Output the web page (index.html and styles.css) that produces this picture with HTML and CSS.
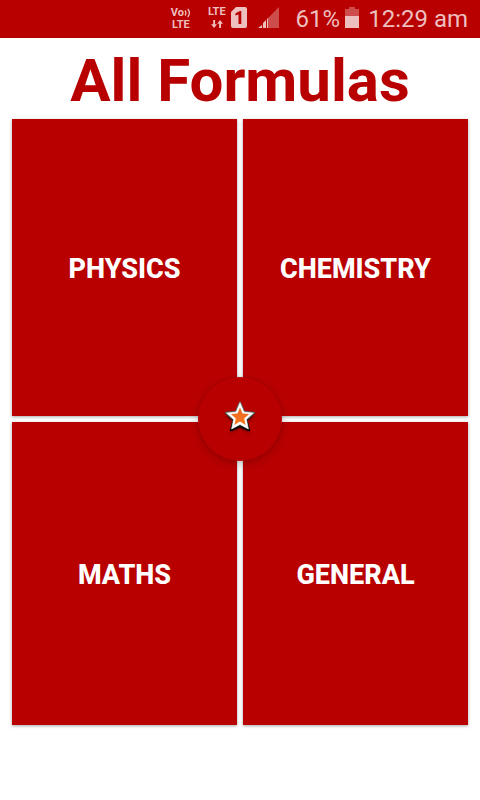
FILE: index.html
```
<!DOCTYPE html>
<html lang="en">
<head>
<meta charset="utf-8">
<meta name="viewport" content="width=device-width, initial-scale=1">
<title>All Formulas</title>
<link rel="stylesheet" href="styles.css">
</head>
<body>
<header class="status">
  <span class="volte"><span class="vo">Vo<svg width="7" height="10" viewBox="0 0 7 10" aria-hidden="true"><path d="M1 2.500q1.800 2.500 0 5M3.800 1q3.200 4 0 8" fill="none" stroke="currentColor" stroke-width="1.300"/></svg></span><span>LTE</span></span>
  <span class="network"><span>LTE</span><svg width="12" height="8" viewBox="0 0 12 8" aria-hidden="true"><path d="M2.200 0h1.900v4.200H6L3.100 8 0 4.200h2.200zM8.100 8H10V3.800h2L9 0 6.200 3.800h1.900z" fill="currentColor"/></svg></span>
  <svg class="sim" width="16" height="21" viewBox="0 0 16 21" aria-hidden="true"><path d="M5 0h9q2 0 2 2v17q0 2-2 2H2q-2 0-2-2V5z" fill="currentColor"/><path d="M7.500 17V7.400L4.500 8.400V6.200L9 4h1.300v13z" fill="#b80000"/></svg>
  <svg class="signal" width="21" height="21" viewBox="0 0 21 21" aria-hidden="true"><path d="M10 11L21 0v21H10z" fill="#cd4d4d"/><path d="M0 21l4-3v3zM5 21v-5l3-3v8zM9 21v-9l1-1v10z" fill="currentColor"/><path d="M4 16h1v5H4zM8 12h1v9H8z" fill="#b80000"/></svg>
  <span class="percent">61%</span>
  <svg class="battery" width="14" height="21" viewBox="0 0 14 21" aria-hidden="true"><path d="M0 2h4V0h6v2h4v7H0z" fill="#cd4d4d"/><path d="M0 9h14v12H0z" fill="currentColor"/></svg>
  <time class="clock">12:29 am</time>
</header>
<main class="page">
  <h1 class="title">All Formulas</h1>
  <div class="grid">
    <button class="card" type="button">PHYSICS</button>
    <button class="card" type="button">CHEMISTRY</button>
    <button class="card" type="button">MATHS</button>
    <button class="card" type="button">GENERAL</button>
    <button class="star" type="button" aria-label="Favourites">
      <svg width="36" height="40" viewBox="0 0 36 40" aria-hidden="true">
        <defs>
          <linearGradient id="edge" x1="0" y1="0" x2="0" y2="1"><stop offset="0" stop-color="#777"/><stop offset=".45" stop-color="#444"/><stop offset="1" stop-color="#000"/></linearGradient>
          <linearGradient id="core" x1="0" y1="0" x2="0" y2="1"><stop offset="0" stop-color="#e8641c"/><stop offset="1" stop-color="#fa7a22"/></linearGradient>
          <filter id="soft" x="-20%" y="-20%" width="140%" height="150%"><feGaussianBlur stdDeviation="1"/></filter>
        </defs>
        <path d="M18 5l4.200 9.500L33 16l-8 7.500L27.500 34 18 29l-9.500 5L11 23.500 3 16l10.800-1.500z" fill="#300" opacity=".6" filter="url(#soft)"/>
        <path d="M18 3l4.400 9.600L32.500 13.600l-7.600 7.500L27.400 31.500 18 27.500l-9.400 4L11.100 21.100 3.500 13.600l10.100-1z" fill="url(#edge)" stroke="url(#edge)" stroke-width="1.500" stroke-linejoin="round"/>
        <path d="M18 4l3.900 8.900L31.500 14l-7.200 6.500 2.100 9.500L18 25.500 9.600 30l2.100-9.500L4.500 14l9.600-1.100z" fill="#fff" stroke="#fff" stroke-width=".6"/>
        <path d="M18 8.500l2.500 5.900 6.600.7-4.900 4.400 1.400 6.400L18 22.600l-5.600 3.300 1.400-6.400-4.900-4.400 6.600-.7z" fill="url(#core)"/>
      </svg>
    </button>
  </div>
</main>
</body>
</html>
```
FILE: styles.css
```
* {
  box-sizing: border-box;
}

body {
  display: flex;
  flex-direction: column;
  min-height: 100vh;
  margin: 0;
  background: #fff;
  font-family: Roboto, "Liberation Sans", sans-serif;
}

.status {
  display: flex;
  justify-content: flex-end;
  align-items: center;
  height: 38px;
  padding: 0 12px;
  background: #b80000;
  color: #edbfbf;
  font-size: 24px;
  line-height: 38px;
}

.volte,
.network {
  display: flex;
  flex-direction: column;
  align-items: center;
  font-size: 11px;
  font-weight: 700;
  line-height: 12px;
}

.volte {
  margin-right: 17px;
}

.vo {
  display: flex;
  align-items: center;
}

.network {
  gap: 2px;
  margin-right: 5px;
  margin-bottom: 4px;
}

.sim {
  margin-right: 11px;
  margin-bottom: 3px;
}

.signal {
  margin-right: 17px;
  margin-bottom: 3px;
}

.percent {
  margin-right: 5px;
}

.battery {
  margin-right: 9px;
  margin-bottom: 4px;
}

.page {
  flex: 1;
  display: flex;
  flex-direction: column;
  padding: 6px 12px 75px;
}

.title {
  margin: 0 0 2px;
  color: #b80000;
  font-size: 60px;
  font-weight: 700;
  line-height: 73px;
  text-align: center;
}

.grid {
  position: relative;
  flex: 1;
  display: grid;
  grid-template-columns: 1fr 1fr;
  grid-template-rows: 297fr 303fr;
  gap: 6px;
}

.card {
  border: 0;
  padding: 2px 0 0;
  background: #b80000;
  box-shadow: 0 1px 3px rgba(0, 0, 0, 0.35);
  color: #fff;
  font: 800 27px Roboto, "Liberation Sans", sans-serif;
}

.star {
  position: absolute;
  top: calc(49.500% - 42px);
  left: calc(50% - 42px);
  display: flex;
  justify-content: center;
  align-items: center;
  width: 84px;
  height: 84px;
  border: 0;
  border-radius: 50%;
  padding: 0;
  background: #b80000;
  box-shadow: 0 3px 8px rgba(0, 0, 0, 0.2), 0 0 2px rgba(0, 0, 0, 0.15);
}
```
